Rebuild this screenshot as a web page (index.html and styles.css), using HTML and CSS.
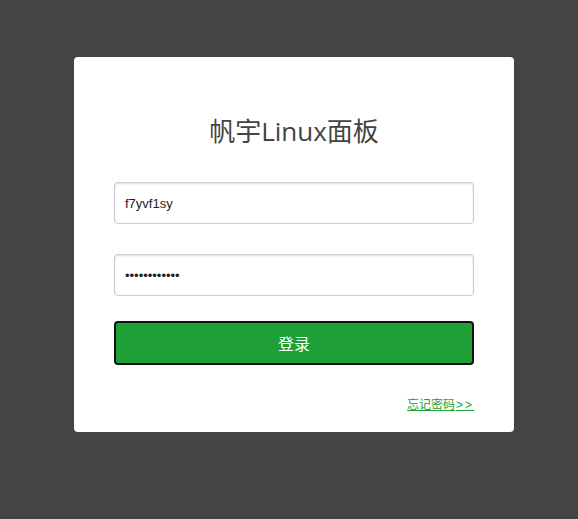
FILE: index.html
```html
<!DOCTYPE html>
<html lang="zh-CN">
  <head>
    <meta charset="UTF-8" />
    <meta name="viewport" content="width=device-width, initial-scale=1.0" />
    <title>帆宇Linux面板</title>
    <link rel="stylesheet" href="styles.css">
  </head>
  <body>
    <div class="login-box">
      <h1 class="login-title">帆宇Linux面板</h1>
      <form class="login-form">
        <input type="text" class="login-input" value="f7yvf1sy" />
        <input type="password" class="login-input" value="abcdefghijkl" />
        <button type="submit" class="login-button">登录</button>
      </form>
      <div class="login-links">
        <a href="#" class="forget-link">忘记密码<span class="arrows">&gt;&gt;</span></a>
      </div>
    </div>
  </body>
</html>
```

FILE: styles.css
```css
body {
  margin: 0;
  padding: 0;
  background: #444;
  font-family: "Liberation Sans", Arial, "Noto Sans CJK SC", sans-serif;
}

.login-box {
  width: 360px;
  margin: 57px 0 0 74px;
  padding: 57px 40px 19px;
  background: #fff;
  border-radius: 4px;
}

.login-title {
  margin: 0;
  font-size: 26px;
  line-height: 34px;
  font-weight: normal;
  text-align: center;
  color: #444;
  font-family: "Open Sans", "Noto Sans CJK SC", sans-serif;
}

.login-form {
  display: flex;
  flex-direction: column;
  margin-top: 34px;
}

.login-input {
  box-sizing: border-box;
  width: 100%;
  height: 42px;
  margin-bottom: 30px;
  padding: 0 10px;
  font-size: 13px;
  font-family: "Liberation Sans", Arial, sans-serif;
  color: #222;
  border: 1px solid #ccc;
  border-radius: 4px;
  background: #fff;
  box-shadow: inset 0 1px 2px rgba(0, 0, 0, 0.12);
  outline: none;
}

.login-input:nth-of-type(2) {
  margin-bottom: 25px;
}

.login-button {
  height: 44px;
  font-size: 16px;
  color: #fff;
  background: #1ea037;
  border: 2px solid #111;
  border-radius: 4px;
  cursor: pointer;
  font-family: "Liberation Sans", "Noto Sans CJK SC", sans-serif;
}

.login-links {
  margin-top: 31px;
  text-align: right;
  line-height: 16px;
}

.forget-link {
  font-size: 12px;
  color: #1ea037;
}

.arrows {
  letter-spacing: 2px;
  margin-left: 1px;
}
```
